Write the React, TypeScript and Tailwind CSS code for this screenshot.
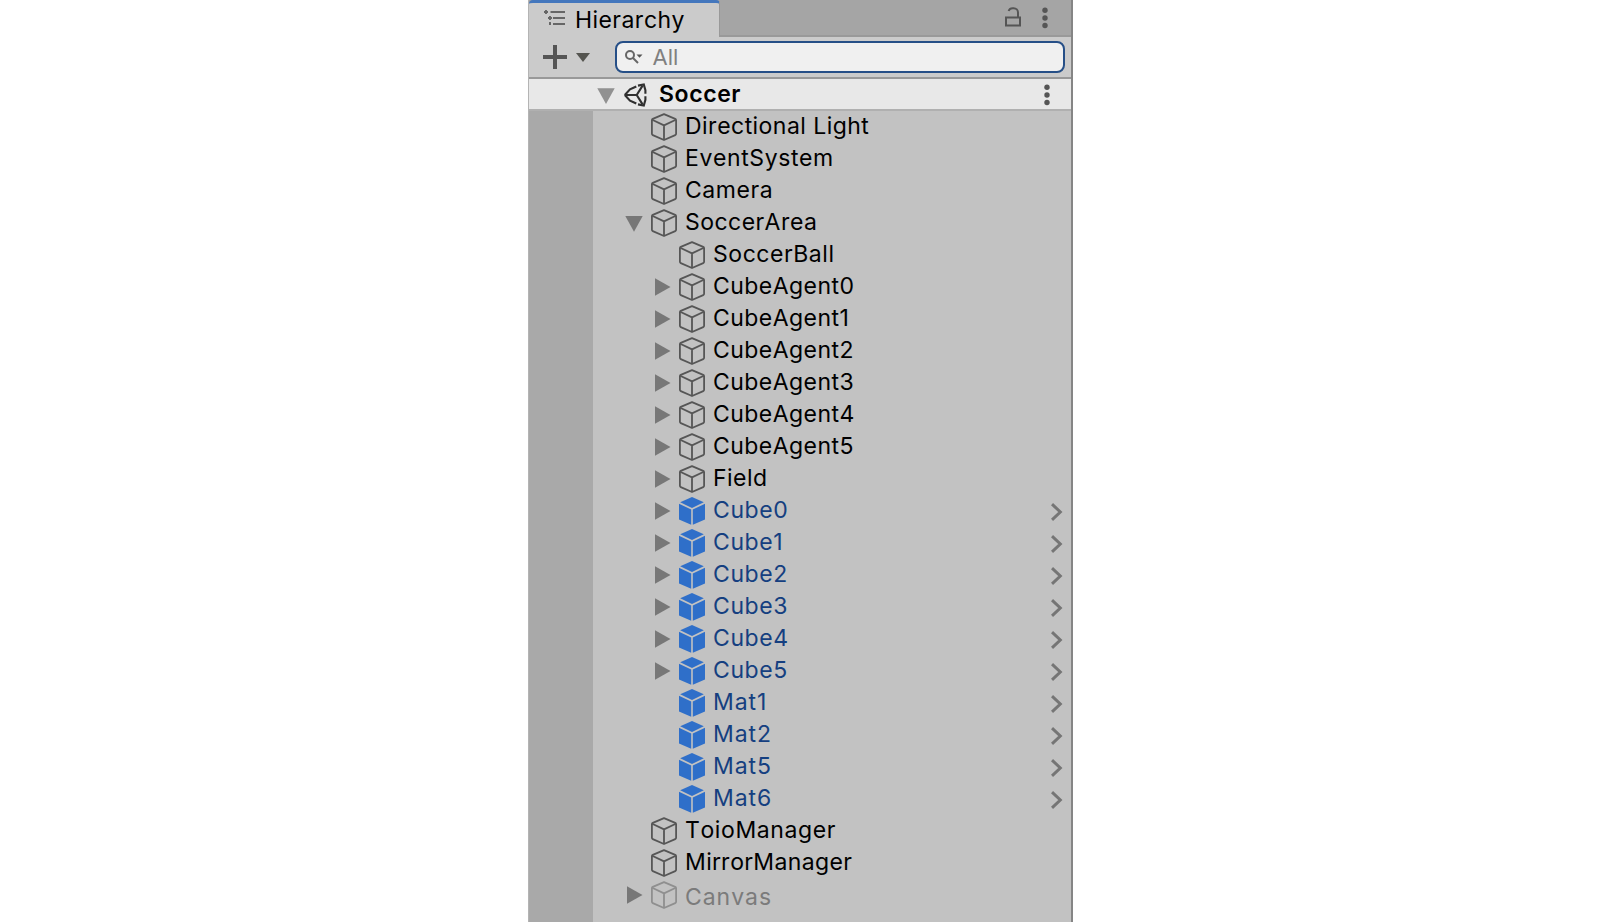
import React from "react";

type Fold = "open" | "closed" | "none";
type Item = { name: string; depth: 0 | 1; fold: Fold; prefab?: boolean; inactive?: boolean; tracking?: string };

const agents: Item[] = [0, 1, 2, 3, 4, 5].map((n) => ({ name: `CubeAgent${n}`, depth: 1, fold: "closed" }));
const cubes: Item[] = [0, 1, 2, 3, 4, 5].map((n) => ({
  name: `Cube${n}`,
  depth: 1,
  fold: "closed",
  prefab: true,
  tracking: "tracking-[0.6px]",
}));
const mats: Item[] = [1, 2, 5, 6].map((n) => ({
  name: `Mat${n}`,
  depth: 1,
  fold: "none",
  prefab: true,
  tracking: "tracking-[0.95px]",
}));

const items: Item[] = [
  { name: "Directional Light", depth: 0, fold: "none" },
  { name: "EventSystem", depth: 0, fold: "none", tracking: "tracking-[0.6px]" },
  { name: "Camera", depth: 0, fold: "none", tracking: "tracking-[0.55px]" },
  { name: "SoccerArea", depth: 0, fold: "open" },
  { name: "SoccerBall", depth: 1, fold: "none", tracking: "tracking-[0.55px]" },
  ...agents,
  { name: "Field", depth: 1, fold: "closed" },
  ...cubes,
  ...mats,
  { name: "ToioManager", depth: 0, fold: "none", tracking: "tracking-[0.6px]" },
  { name: "MirrorManager", depth: 0, fold: "none", tracking: "tracking-[0.37px]" },
  { name: "Canvas", depth: 0, fold: "closed", inactive: true, tracking: "tracking-[0.95px]" },
];

function Arrow({ fold }: { fold: Fold }) {
  return (
    <svg viewBox="0 0 18 18" className="size-[18px] shrink-0 fill-[#777777]">
      {fold === "open" && <path d="M0.3 2H17.7L9 17.7Z" />}
      {fold === "closed" && <path d="M2 0.3L17.5 9L2 17.7Z" />}
    </svg>
  );
}

function CubeOutline({ faded }: { faded?: boolean }) {
  return (
    <svg
      viewBox="0 0 26 28"
      className={`h-7 w-[26px] shrink-0 fill-none stroke-[1.8] ${faded ? "stroke-[#8f8f8f]" : "stroke-[#565656]"}`}
      strokeLinejoin="round"
    >
      <path d="M13 1.2L24.2 5.9Q25.1 6.3 25.1 7.2V20.8Q25.1 21.7 24.2 22.1L13 27L1.8 22.1Q0.9 21.7 0.9 20.8V7.2Q0.9 6.3 1.8 5.9Z" />
      <path d="M1.2 6.8L13 12.4L24.8 6.8M13 12.4V26.8" />
    </svg>
  );
}

function CubeSolid() {
  return (
    <svg viewBox="0 0 26 28" className="h-7 w-[26px] shrink-0 fill-[#2f6fc9]">
      <path d="M13 0L24.8 5.3L13 10.9L1.2 5.3Z" />
      <path d="M0 6.8L12.2 12.5V27.8L0 22.4Z" />
      <path d="M26 6.8L13.8 12.5V27.8L26 22.4Z" />
    </svg>
  );
}

function Dots() {
  return (
    <svg viewBox="0 0 6 22" className="h-[22px] w-1.5 shrink-0 fill-[#555555]">
      <circle cx="3" cy="3.3" r="2.7" />
      <circle cx="3" cy="11" r="2.7" />
      <circle cx="3" cy="18.5" r="2.7" />
    </svg>
  );
}

function Row({ item }: { item: Item }) {
  const color = item.inactive ? "text-[#7b7b7b]" : item.prefab ? "text-[#153f80]" : "text-black";
  return (
    <li className={`flex h-8 items-center pr-2 ${item.depth === 1 ? "pl-[60px]" : "pl-8"}`}>
      <Arrow fold={item.fold} />
      <div className="ml-2 flex">{item.prefab ? <CubeSolid /> : <CubeOutline faded={item.inactive} />}</div>
      <span
        className={`ml-[8.5px] flex-1 leading-8 ${color} ${item.inactive ? "pt-[3px]" : "pb-[3px]"} ${item.tracking ?? "tracking-[0.45px]"}`}
      >
        {item.name}
      </span>
      {item.prefab && (
        <svg viewBox="0 0 12 18" className="mt-0.5 h-[18px] w-3 fill-none stroke-[#757575] stroke-[3]">
          <path d="M1 1.1L9.3 9L1 16.9" />
        </svg>
      )}
    </li>
  );
}

export default function App() {
  return (
    <div className="flex h-[922px] w-full justify-center overflow-hidden bg-white font-['Inter',sans-serif] text-[23px] tracking-[0.43px] [font-kerning:none]">
      <section className="flex w-[545px] flex-col border-r-2 border-l border-r-[#858585] border-l-[#b4b4b4] bg-[#c2c2c2]">
        <header className="flex h-[37px] shrink-0 bg-[#a5a5a5]">
          <div className="flex w-[191px] items-center rounded-t-sm border-t-[3px] border-r border-t-[#4477bd] border-r-[#999999] bg-[#cbcbcb] pl-[15px]">
            <svg viewBox="0 0 22 20" className="h-5 w-[22px] fill-none stroke-[#666666] stroke-[1.9]">
              <path d="M0 2H4M2 0V4M6.5 2H21M4 8H8M6 6V10M9 8H21M5 14H7M6 12V15M9 14H21" />
            </svg>
            <span className="ml-[9.5px]">Hierarchy</span>
          </div>
          <div className="flex flex-1 items-center justify-end border-b-2 border-[#999999] pr-[23px]">
            <svg viewBox="0 0 18 20" className="mr-5 mb-px h-5 w-[18px] fill-none stroke-[#555555] stroke-2">
              <path d="M2 10.5H16V18.5H2ZM14 10.5V5.5A4.3 4.3 0 0 0 9.7 1.2H8.8A4.3 4.3 0 0 0 4.6 4" />
            </svg>
            <Dots />
          </div>
        </header>

        <div className="flex h-[42px] shrink-0 items-center border-b-2 border-[#999999] bg-[#cbcbcb] pr-1.5 pl-[14px]">
          <svg viewBox="0 0 24 24" className="size-6 stroke-[#555555] stroke-4">
            <path d="M0 12H24M12 0V24" />
          </svg>
          <svg viewBox="0 0 14 9" className="ml-[9px] h-[9px] w-[14px] fill-[#555550]">
            <path d="M0 0H14L7 9Z" />
          </svg>
          <div className="ml-[25px] flex h-8 flex-1 items-center rounded-lg border-2 border-[#264f87] bg-[#f0f0f0] pl-2">
            <svg viewBox="0 0 18 14" className="h-[14px] w-[18px] fill-none stroke-[#666666] stroke-2">
              <circle cx="5" cy="5" r="4" />
              <path d="M8 8L13 13" />
              <path d="M11.5 4.5H17.5L14.5 7.7Z" className="fill-[#555555] stroke-none" />
            </svg>
            <span className="ml-2.5 pt-px text-[22px] tracking-normal text-[#808080]">All</span>
          </div>
        </div>

        <div className="flex h-8 shrink-0 items-center border-b-2 border-[#b0b0b0] bg-[#e8e8e8] pr-[21px] pl-[68px]">
          <svg viewBox="0 0 18 18" className="mt-[3px] size-[18px] fill-[#919191]">
            <path d="M0.3 1.3H17.7L9 17Z" />
          </svg>
          <svg viewBox="0 0 24 24" className="mt-px ml-2 size-6 fill-none stroke-[#303030] stroke-[2.1]">
            <path d="M1.8 12L7 6.4L13.3 3.5M15 2.6L20.8 1.4L22.4 7.2V10.8M22.4 13.2V16.8L20.8 22.6L15 21.4M13.3 20.5L7 17.6L1.8 12" />
            <path d="M1.8 12H13.7L19.6 2.6M13.7 12L19.6 21.4" />
          </svg>
          <span className="ml-[12.5px] flex-1 font-semibold tracking-[0.6px]">Soccer</span>
          <div className="mt-0.5 flex">
            <Dots />
          </div>
        </div>

        <div className="flex flex-1">
          <div className="w-16 shrink-0 bg-[#a9a9a9]" />
          <ul className="flex-1">
            {items.map((item) => (
              <Row key={item.name} item={item} />
            ))}
          </ul>
        </div>
      </section>
    </div>
  );
}
